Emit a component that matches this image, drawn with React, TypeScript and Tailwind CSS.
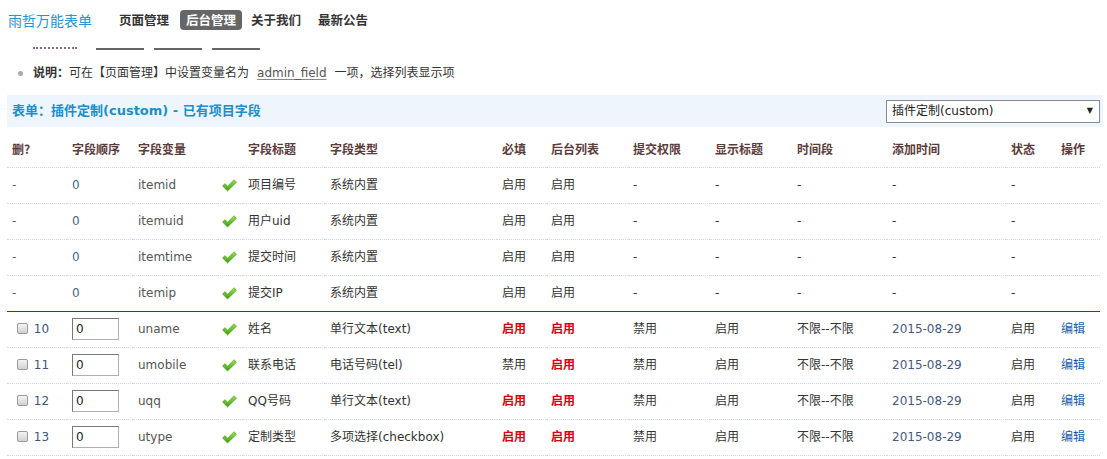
import * as React from "react";

const FONT = "font-['DejaVu_Sans','Noto_Sans_CJK_SC',sans-serif]";

type SysRow = { name: string; title: string };
type CustomRow = {
  id: number;
  name: string;
  title: string;
  type: string;
  required: boolean;
  list: boolean;
};

const sysRows: SysRow[] = [
  { name: "itemid", title: "项目编号" },
  { name: "itemuid", title: "用户uid" },
  { name: "itemtime", title: "提交时间" },
  { name: "itemip", title: "提交IP" },
];

const customRows: CustomRow[] = [
  { id: 10, name: "uname", title: "姓名", type: "单行文本(text)", required: true, list: true },
  { id: 11, name: "umobile", title: "联系电话", type: "电话号码(tel)", required: false, list: true },
  { id: 12, name: "uqq", title: "QQ号码", type: "单行文本(text)", required: true, list: true },
  { id: 13, name: "utype", title: "定制类型", type: "多项选择(checkbox)", required: true, list: true },
];

const headers = ["删?", "字段顺序", "字段变量", "", "字段标题", "字段类型", "必填", "后台列表", "提交权限", "显示标题", "时间段", "添加时间", "状态", "操作"];
const widths = [60, 66, 84, 26, 82, 172, 49, 82, 82, 82, 95, 119, 50, 44];

function Check() {
  return (
    <svg width="15" height="13" viewBox="0 0 15 13" className="block">
      <defs>
        <linearGradient id="ck" x1="0" y1="0" x2="0" y2="1">
          <stop offset="0" stopColor="#9be04a" />
          <stop offset="1" stopColor="#3e9e14" />
        </linearGradient>
      </defs>
      <path d="M0.5 7 L3 4.6 L5.6 7.2 L12 0.8 L14.5 3.2 L5.6 12 Z" fill="url(#ck)" stroke="#4a9a1e" strokeWidth="0.6" />
    </svg>
  );
}

function Box() {
  return <span className="inline-block h-[11px] w-[11px] rounded-[2px] border border-[#9a9a9a] bg-gradient-to-b from-[#f4f4f4] to-[#d2d2d2] align-[-1px]" />;
}

const td = "px-[5px] h-[36px] border-b border-dotted border-[#c9dcec] whitespace-nowrap";
const redLine = "!border-solid !border-[#d40000]";

export default function App() {
  return (
    <div className={`${FONT} w-[1107px] h-[459px] overflow-hidden bg-white text-[12px] text-[#333]`}>
      {/* nav */}
      <div className="flex h-[40px] items-center">
        <div className="ml-[8px] text-[14px] font-['Noto_Sans_CJK_SC',sans-serif] text-[#2593d4]">雨哲万能表单</div>
        <div className="ml-[27px] flex items-center text-[12.5px] font-bold font-['Noto_Sans_CJK_SC',sans-serif] text-[#333]">
          <span>页面管理</span>
          <span className="ml-[11px] rounded-[4px] bg-[#666] px-[6px] py-[1px] text-white">后台管理</span>
          <span className="ml-[9px]">关于我们</span>
          <span className="ml-[17px]">最新公告</span>
        </div>
      </div>

      {/* clipped row */}
      <div className="flex h-[10px] items-end">
        <div className="mb-[1px] ml-[33px] h-[2px] w-[44px] border-b-2 border-dotted border-[#8a6a8a]" />
        <div className="ml-[19px] h-[2px] w-[48px] bg-[#666]" />
        <div className="ml-[10px] h-[2px] w-[48px] bg-[#666]" />
        <div className="ml-[10px] h-[2px] w-[48px] bg-[#666]" />
      </div>

      {/* note */}
      <div className="mt-[15px] flex h-[16px] items-center text-[12px] text-[#333]">
        <span className="ml-[18px] h-[5px] w-[5px] rounded-full bg-[#aaa]" />
        <span className="ml-[10px] font-bold">说明：</span>
        <span>可在【页面管理】中设置变量名为</span>
        <span className="mx-[8px] text-[#555] underline underline-offset-2 decoration-[#888]">admin_field</span>
        <span>一项，选择列表显示项</span>
      </div>

      {/* band */}
      <div className="ml-[7px] mr-[4px] mt-[14px] flex h-[32px] items-center justify-between bg-[#eef5fc] pl-[5px] pr-[3px]">
        <div className="text-[13px] font-bold text-[#1a8fc9]">表单：插件定制(custom) - 已有项目字段</div>
        <div className="flex h-[23px] w-[214px] items-center justify-between border border-[#8a8a8a] bg-white pl-[5px] pr-[6px] text-[12px] text-[#222]">
          <span>插件定制(custom)</span>
          <span className="text-[8px]">▼</span>
        </div>
      </div>

      <table className="ml-[7px] mt-[4px] table-fixed border-collapse" style={{ width: 1093 }}>
        <colgroup>
          {widths.map((w, i) => (
            <col key={i} style={{ width: w }} />
          ))}
        </colgroup>
        <thead>
          <tr>
            {headers.map((h, i) => (
              <th key={i} className={`${td} text-left font-bold text-[#5a3c3c] font-['Noto_Sans_CJK_SC',sans-serif] ${i === 3 ? "px-0" : ""}`}>
                {h}
              </th>
            ))}
          </tr>
        </thead>
        <tbody>
          {sysRows.map((r, idx) => {
            const b = idx === 3 ? redLine : "";
            return (
              <tr key={r.name}>
                <td className={`${td} ${b} text-[#46658a]`}>-</td>
                <td className={`${td} ${b} text-[#46658a]`}>0</td>
                <td className={`${td} ${b} text-[#555]`}>{r.name}</td>
                <td className={`${td} ${b}`}><Check /></td>
                <td className={`${td} ${b}`}>{r.title}</td>
                <td className={`${td} ${b}`}>系统内置</td>
                <td className={`${td} ${b}`}>启用</td>
                <td className={`${td} ${b}`}>启用</td>
                <td className={`${td} ${b}`}>-</td>
                <td className={`${td} ${b}`}>-</td>
                <td className={`${td} ${b}`}>-</td>
                <td className={`${td} ${b}`}>-</td>
                <td className={`${td} ${b}`}>-</td>
                <td className={`${td} ${b}`}></td>
              </tr>
            );
          })}
          {customRows.map((r) => (
            <tr key={r.id}>
              <td className={`${td} pl-[10px] text-[#3f5578]`}>
                <Box /> <span className="ml-[2px]">{r.id}</span>
              </td>
              <td className={td}>
                <div className="flex h-[22px] w-[47px] items-center border border-[#b0b0b0] border-t-[#777] border-l-[#777] bg-white pl-[3px] text-[#222]">0</div>
              </td>
              <td className={`${td} text-[#555]`}>{r.name}</td>
              <td className={td}><Check /></td>
              <td className={td}>{r.title}</td>
              <td className={td}>{r.type}</td>
              <td className={`${td} ${r.required ? "font-bold text-[#d40010]" : ""}`}>{r.required ? "启用" : "禁用"}</td>
              <td className={`${td} ${r.list ? "font-bold text-[#d40010]" : ""}`}>{r.list ? "启用" : "禁用"}</td>
              <td className={td}>禁用</td>
              <td className={td}>启用</td>
              <td className={td}>不限--不限</td>
              <td className={`${td} text-[#46587e]`}>2015-08-29</td>
              <td className={td}>启用</td>
              <td className={`${td} text-[#1a5ea8]`}>编辑</td>
            </tr>
          ))}
        </tbody>
      </table>
    </div>
  );
}
